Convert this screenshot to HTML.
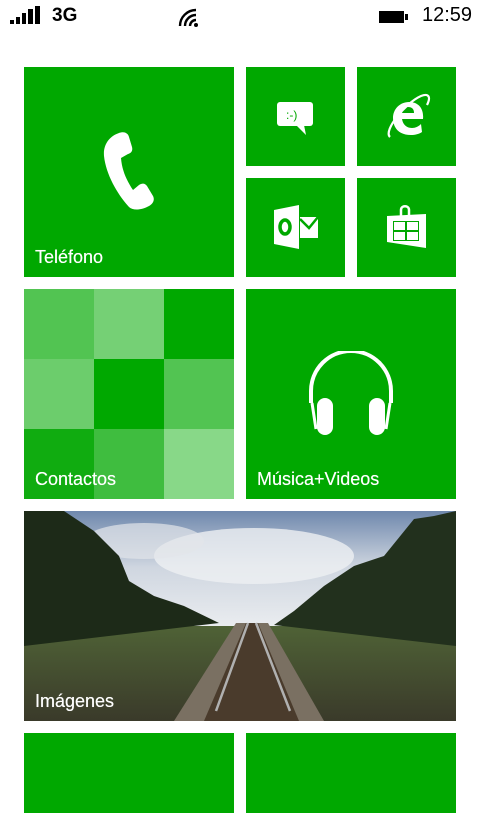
<!DOCTYPE html>
<html><head><meta charset="utf-8"><style>
*{margin:0;padding:0}
body{width:480px;height:800px;background:#fff;position:relative;overflow:hidden;font-family:"Segoe UI","Liberation Sans",sans-serif}
.t{position:absolute;background:#00a800;overflow:hidden}
.lbl{position:absolute;left:11px;bottom:9px;color:#fff;font-size:18px;text-shadow:0 0 0.4px #fff}
.sb{position:absolute;top:5px;font-size:19px;color:#000}
</style></head><body>
<svg style="position:absolute;left:10px;top:6px" width="32" height="20"><rect x="0" y="14" width="4" height="4"/><rect x="6" y="11" width="4" height="7"/><rect x="12" y="7" width="4" height="11"/><rect x="18" y="3" width="5" height="15"/><rect x="25" y="0" width="5" height="18"/></svg>
<div class="sb" style="left:52px;font-weight:bold">3G</div>
<svg style="position:absolute;left:176px;top:6px" width="24" height="22" fill="none" stroke="#000" stroke-width="2.4"><path d="M4 20 A16 16 0 0 1 20 4"/><path d="M9 20 A11 11 0 0 1 20 9"/><path d="M14 20 A6 6 0 0 1 20 14"/><circle cx="20" cy="19" r="2" fill="#000" stroke="none"/></svg>
<svg style="position:absolute;left:378px;top:10px" width="32" height="14"><rect x="1" y="1" width="25" height="12" fill="#000"/><rect x="27" y="4" width="3" height="6" fill="#000"/></svg>
<div class="sb" style="left:422px;top:4px;font-size:20px">12:59</div>

<div class="t" style="left:24px;top:67px;width:210px;height:210px">
<svg style="position:absolute;left:78px;top:64px" width="56" height="82" viewBox="0 0 56 82"><path fill="#fff" d="M17 2 C22 0 26 2 27 6 L30 16 C31 20 29 22 26 23 L19 27 C20 40 25 50 31 59 L37 54 C40 52 43 52 45 55 L51 65 C53 69 51 73 47 75 C40 79 31 80 27 76 C16 64 4 44 2 25 C1 13 8 5 17 2Z"/></svg>
<div class="lbl">Teléfono</div></div>

<div class="t" style="left:246px;top:67px;width:99px;height:99px">
<svg style="position:absolute;left:30px;top:34px" width="38" height="36"><rect x="1" y="1" width="36" height="24" rx="3" fill="#fff"/><path d="M20 24 L30 34 L28 24Z" fill="#fff"/><text x="10" y="18" font-size="12" fill="#00a800" font-family="Liberation Sans">:-)</text></svg></div>
<div class="t" style="left:357px;top:67px;width:99px;height:99px">
<svg style="position:absolute;left:28px;top:26px" width="46" height="46" viewBox="0 0 46 46"><path fill="#fff" d="M24 9 C34 9 39 16 38 26 L17 26 C18 32 22 35 27 35 C31 35 34 33 36 31 L37 39 C34 41 30 42 26 42 C14 42 8 35 8 25 C8 16 15 9 24 9Z M17 20 L29 20 C29 16 27 14 23 14 C20 14 18 16 17 20Z"/><path fill="none" stroke="#fff" stroke-width="2.2" d="M5 44 C-2 38 20 10 36 3 C44 0 46 4 42 12"/></svg></div>
<div class="t" style="left:246px;top:178px;width:99px;height:99px">
<svg style="position:absolute;left:27px;top:27px" width="46" height="46"><path fill="#fff" d="M1 5 L26 0 L26 44 L1 39Z"/><rect x="27" y="12" width="18" height="21" fill="#fff"/><path d="M27 14 L36 23 L45 12" fill="none" stroke="#00a800" stroke-width="2.5"/><ellipse cx="12" cy="22" rx="5" ry="7" fill="none" stroke="#00a800" stroke-width="3.5"/></svg></div>
<div class="t" style="left:357px;top:178px;width:99px;height:99px">
<svg style="position:absolute;left:29px;top:24px" width="42" height="48"><path fill="none" stroke="#fff" stroke-width="2.5" d="M15 14 L15 8 C15 3 23 3 23 8 L23 14"/><path fill="#fff" d="M1 14 L40 12 L40 46 L1 40Z"/><g fill="#00a800"><rect x="7" y="19" width="26" height="20"/></g><g fill="#fff"><rect x="8" y="20" width="11" height="8"/><rect x="21" y="20" width="11" height="8"/><rect x="8" y="30" width="11" height="8"/><rect x="21" y="30" width="11" height="8"/></g></svg></div>

<div class="t" style="left:24px;top:289px;width:210px;height:210px">
<div style="position:absolute;left:0;top:0;width:70px;height:70px;background:#52c452"></div>
<div style="position:absolute;left:70px;top:0;width:70px;height:70px;background:#75d075"></div>
<div style="position:absolute;left:0;top:70px;width:70px;height:70px;background:#6ccd6c"></div>
<div style="position:absolute;left:140px;top:70px;width:70px;height:70px;background:#52c452"></div>
<div style="position:absolute;left:0;top:140px;width:70px;height:70px;background:#10ac10"></div>
<div style="position:absolute;left:70px;top:140px;width:70px;height:70px;background:#3fbd3f"></div>
<div style="position:absolute;left:140px;top:140px;width:70px;height:70px;background:#88d888"></div>
<div class="lbl">Contactos</div></div>

<div class="t" style="left:246px;top:289px;width:210px;height:210px">
<svg style="position:absolute;left:60px;top:62px" width="90" height="90"><path d="M5 52 L5 40 A40 40 0 0 1 85 40 L85 52" fill="none" stroke="#fff" stroke-width="4"/><path d="M6 52 L10 78 M84 52 L80 78" stroke="#fff" stroke-width="3"/><rect x="11" y="47" width="16" height="37" rx="8" fill="#fff"/><rect x="63" y="47" width="16" height="37" rx="8" fill="#fff"/></svg>
<div class="lbl">Música+Videos</div></div>

<div class="t" style="left:24px;top:511px;width:432px;height:210px;background:#7c8a9a">
<svg width="432" height="210" style="position:absolute;left:0;top:0">
<defs><linearGradient id="sky" x1="0" y1="0" x2="0" y2="1"><stop offset="0" stop-color="#6f88ad"/><stop offset=".45" stop-color="#cfd6e0"/><stop offset="1" stop-color="#eef0f2"/></linearGradient>
<linearGradient id="gr" x1="0" y1="0" x2="0" y2="1"><stop offset="0" stop-color="#4f6236"/><stop offset="1" stop-color="#3a3a2a"/></linearGradient></defs>
<rect width="432" height="125" fill="url(#sky)"/>
<ellipse cx="230" cy="45" rx="100" ry="28" fill="#eef0f3" opacity=".8"/>
<ellipse cx="120" cy="30" rx="60" ry="18" fill="#e3e6ea" opacity=".7"/>
<rect y="115" width="432" height="95" fill="url(#gr)"/>
<path d="M0 0 L40 0 L70 20 L95 45 L105 70 L130 85 L160 95 L195 112 L0 135Z" fill="#1d2a18"/>
<path d="M432 0 L432 135 L250 114 L270 100 L300 75 L330 55 L360 45 L390 8 L410 5Z" fill="#22301d"/>
<path d="M212 112 L244 112 L300 210 L150 210Z" fill="#7a7062"/>
<path d="M222 112 L234 112 L275 210 L180 210Z" fill="#4a3b2c"/>
<path d="M224 112 L192 200 M232 112 L266 200" stroke="#b0b0b0" stroke-width="2.5"/>
</svg>
<div class="lbl">Imágenes</div></div>

<div class="t" style="left:24px;top:733px;width:210px;height:80px"></div>
<div class="t" style="left:246px;top:733px;width:210px;height:80px"></div>
</body></html>
